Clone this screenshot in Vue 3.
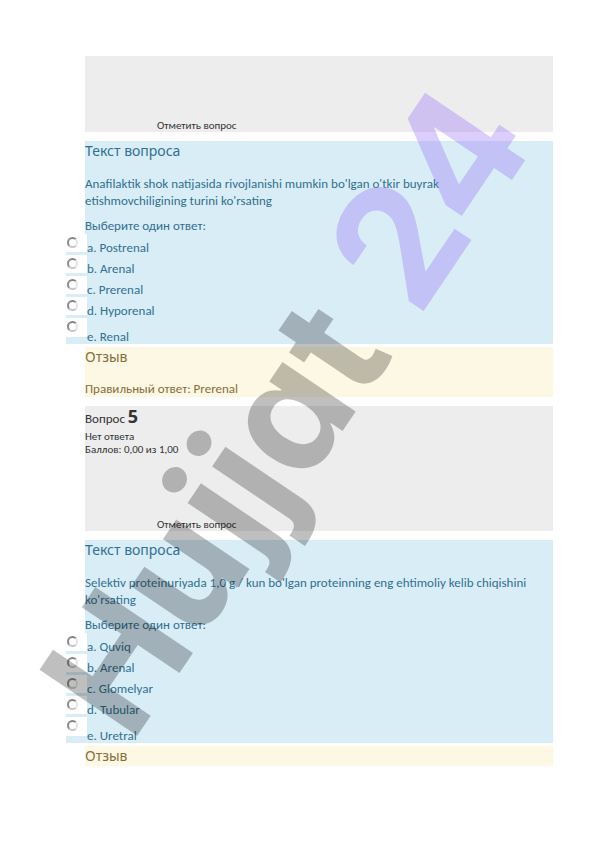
<script setup>
  import { ref } from 'vue';

  const questions = ref([
    {
      id: 4,
      text: "Anafilaktik shok natijasida rivojlanishi mumkin bo'lgan o'tkir buyrak etishmovchiligining turini ko'rsating",
      answers: ["a. Postrenal", "b. Arenal", "c. Prerenal", "d. Hyporenal", "e. Renal"],
      correct: "Prerenal",
      picked: null
    },
    {
      id: 5,
      title: "5",
      state: "Нет ответа",
      grade: "Баллов: 0,00 из 1,00",
      text: "Selektiv proteinuriyada 1,0 g / kun bo'lgan proteinning eng ehtimoliy kelib chiqishini ko'rsating",
      answers: ["a. Quviq", "b. Arenal", "c. Glomelyar", "d. Tubular", "e. Uretral"],
      picked: null
    }
  ]);
</script>
<template>
  <main>
    <section v-for="question in questions" :key="question.id" class="question">
      <div class="info">
        <div v-if="question.title" class="summary">
          <h2>Вопрос <b>{{ question.title }}</b></h2>
          <p>{{ question.state }}</p>
          <p>{{ question.grade }}</p>
        </div>
        <a href="#" class="flag" @click.prevent>Отметить вопрос</a>
      </div>

      <div class="content">
        <h3>Текст вопроса</h3>
        <p class="text">{{ question.text }}</p>
        <p class="prompt">Выберите один ответ:</p>
        <ul class="answers">
          <li v-for="(answer, index) in question.answers" :key="answer">
            <span class="pick">
              <input type="radio" :id="`q${question.id}-${index}`" :name="`q${question.id}`" :value="index" v-model="question.picked">
            </span>
            <label :for="`q${question.id}-${index}`">{{ answer }}</label>
          </li>
        </ul>
      </div>

      <div class="feedback">
        <h3>Отзыв</h3>
        <p v-if="question.correct">Правильный ответ: {{ question.correct }}</p>
      </div>
    </section>

    <svg class="watermark" viewBox="0 0 596 842">
      <g transform="translate(139 733) rotate(-56)">
        <text class="word" x="-14" y="0">Hujjat</text>
        <text class="number" x="499" y="0">24</text>
      </g>
    </svg>
  </main>
</template>

<style>
  body {
    margin: 0;
    background-color: white;
  }
</style>

<style scoped>
  main {
    position: relative;
    padding: 56px 43px 67px 85px;
    font-family: Carlito, Lato, "Noto Sans", sans-serif;
    font-size: 13px;
    line-height: 17px;
    color: #31708f;
  }

  h2, h3, p, ul {
    margin: 0;
    padding: 0;
    font-weight: normal;
  }

  h3 {
    font-family: "Noto Sans", sans-serif;
    font-size: 14px;
    line-height: 20px;
  }

  .question {
    margin-bottom: 9px;
  }

  .info {
    display: flex;
    flex-direction: column;
    justify-content: flex-end;
    min-height: 76px;
    margin-bottom: 9px;
    background-color: #ededed;
    color: #333;
    font-size: 11px;
    line-height: 13px;
  }

  .summary {
    margin-bottom: 62px;
    padding-top: 2px;
  }

  .summary h2 {
    font-size: 13px;
    line-height: 22px;
  }

  .summary b {
    font-family: "Noto Sans", sans-serif;
    font-size: 18px;
    line-height: 14px;
  }

  .flag {
    align-self: flex-start;
    margin-left: 72px;
    color: #333;
    text-decoration: none;
  }

  .content {
    background-color: #d9edf7;
  }

  .text {
    margin-top: 14px;
    margin-bottom: 8px;
    padding-right: 18px;
  }

  .answers {
    list-style: none;
    margin-left: -19px;
  }

  .answers li {
    display: flex;
    align-items: flex-end;
    height: 21px;
    line-height: 14px;
  }

  .answers li:last-child {
    height: 26px;
  }

  .pick {
    box-sizing: border-box;
    align-self: flex-start;
    width: 21px;
    height: 21px;
    padding: 3px 1px;
    background-color: white;
    border-bottom: 3px solid #d9edf7;
  }

  .answers li:last-child .pick {
    height: 26px;
    border-bottom-width: 7px;
  }

  .pick input {
    appearance: none;
    display: block;
    box-sizing: border-box;
    width: 11px;
    height: 11px;
    margin: 0;
    border: 2px solid;
    border-color: #858585 #e4e4e4 #c8c8c8 #8c8c8c;
    border-radius: 50%;
  }

  .pick input:checked {
    background-color: #555;
  }

  .feedback {
    margin-top: 3px;
    background-color: #fcf8e3;
    color: #8a6d3b;
  }

  .feedback p {
    margin-top: 13px;
  }

  .watermark {
    position: absolute;
    top: 0;
    left: 0;
    width: 100%;
    overflow: visible;
    font-family: Inter, sans-serif;
    font-size: 162px;
    font-weight: 700;
    font-feature-settings: "cv11";
    pointer-events: none;
  }

  .word {
    fill: rgba(0, 0, 0, 0.25);
  }

  .number {
    font-size: 166px;
    fill: rgba(154, 114, 245, 0.35);
  }
</style>
